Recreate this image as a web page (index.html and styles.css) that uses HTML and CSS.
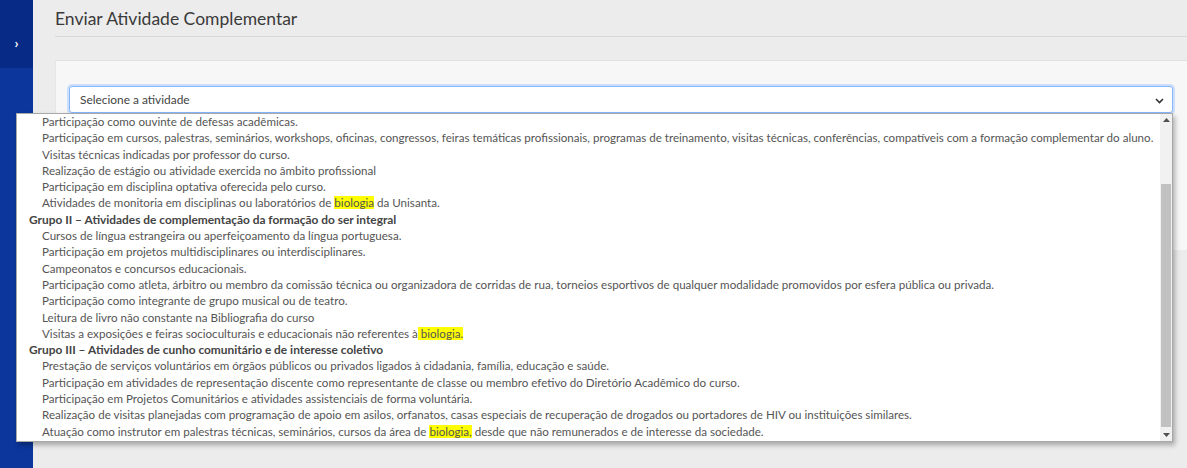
FILE: index.html
```html
<!DOCTYPE html>
<html lang="pt-BR">
<head>
<meta charset="utf-8">
<title>Enviar Atividade Complementar</title>
<link rel="stylesheet" href="styles.css">
</head>
<body>
<div class="app">
  <aside class="sidebar">
    <div class="sidebar-top"><span class="chev">›</span></div>
    <div class="sidebar-bottom"></div>
  </aside>
  <main class="main">
    <h1 class="title">Enviar Atividade Complementar</h1>
    <section class="card">
      <div class="select">
        <span>Selecione a atividade</span>
        <svg class="caret" width="9" height="6" viewBox="0 0 9 6"><path d="M1 1l3.5 3.5L8 1" fill="none" stroke="#333" stroke-width="1.6"/></svg>
      </div>
    </section>
  </main>
</div>

<div class="dropdown">
  <ul class="options">
    <li class="opt">Participação como ouvinte de defesas acadêmicas.</li>
    <li class="opt">Participação em cursos, palestras, seminários, workshops, oficinas, congressos, feiras temáticas profissionais, programas de treinamento, visitas técnicas, conferências, compatíveis com a formação complementar do aluno.</li>
    <li class="opt">Visitas técnicas indicadas por professor do curso.</li>
    <li class="opt">Realização de estágio ou atividade exercida no âmbito profissional</li>
    <li class="opt">Participação em disciplina optativa oferecida pelo curso.</li>
    <li class="opt">Atividades de monitoria em disciplinas ou laboratórios de <mark>biologia</mark> da Unisanta.</li>
    <li class="grp">Grupo II – Atividades de complementação da formação do ser integral</li>
    <li class="opt">Cursos de língua estrangeira ou aperfeiçoamento da língua portuguesa.</li>
    <li class="opt">Participação em projetos multidisciplinares ou interdisciplinares.</li>
    <li class="opt">Campeonatos e concursos educacionais.</li>
    <li class="opt">Participação como atleta, árbitro ou membro da comissão técnica ou organizadora de corridas de rua, torneios esportivos de qualquer modalidade promovidos por esfera pública ou privada.</li>
    <li class="opt">Participação como integrante de grupo musical ou de teatro.</li>
    <li class="opt">Leitura de livro não constante na Bibliografia do curso</li>
    <li class="opt">Visitas a exposições e feiras socioculturais e educacionais não referentes à<mark> biologia. </mark></li>
    <li class="grp">Grupo III – Atividades de cunho comunitário e de interesse coletivo</li>
    <li class="opt">Prestação de serviços voluntários em órgãos públicos ou privados ligados à cidadania, família, educação e saúde.</li>
    <li class="opt">Participação em atividades de representação discente como representante de classe ou membro efetivo do Diretório Acadêmico do curso.</li>
    <li class="opt">Participação em Projetos Comunitários e atividades assistenciais de forma voluntária.</li>
    <li class="opt">Realização de visitas planejadas com programação de apoio em asilos, orfanatos, casas especiais de recuperação de drogados ou portadores de HIV ou instituições similares.</li>
    <li class="opt">Atuação como instrutor em palestras técnicas, seminários, cursos da área de <mark>biologia,</mark> desde que não remunerados e de interesse da sociedade.</li>
  </ul>
  <div class="scrollbar">
    <div class="sb-btn"><svg width="7" height="4" viewBox="0 0 7 4"><path d="M0 4L3.5 0 7 4z" fill="#505050"/></svg></div>
    <div class="sb-track"><div class="sb-thumb"></div></div>
    <div class="sb-btn"><svg width="7" height="4" viewBox="0 0 7 4"><path d="M0 0h7L3.5 4z" fill="#505050"/></svg></div>
  </div>
</div>
</body>
</html>
```

FILE: styles.css
```css
* { box-sizing: border-box; }
html, body { margin: 0; padding: 0; }
body {
  width: 1187px;
  height: 468px;
  overflow: hidden;
  background: #ececec;
  font-family: Lato, "Open Sans", "Liberation Sans", sans-serif;
  color: #555;
  position: relative;
}
.app { display: flex; height: 468px; }
.sidebar {
  width: 33px;
  display: flex;
  flex-direction: column;
  flex-shrink: 0;
}
.sidebar-top {
  height: 68px;
  background: #062a85;
  display: flex;
  justify-content: center;
  align-items: flex-start;
  padding-top: 36px;
}
.chev { color: #fff; font-weight: 700; font-size: 14px; line-height: 14px; }
.sidebar-bottom { flex: 1; background: #0c369c; }

.main { flex: 1; padding-left: 22px; display: flex; flex-direction: column; }
.title {
  margin: 0;
  height: 37px;
  padding-top: 8px;
  font-size: 17.5px;
  font-weight: 400;
  color: #3a3a3a;
  border-bottom: 1px solid #d8d8d8;
}
.card {
  margin-top: 23px;
  height: 190px;
  background: #f7f7f7;
  border-top: 1px solid #e0e0e0;
  border-left: 1px solid #e6e6e6;
  padding: 25px 14px 0 13px;
}
.select {
  height: 27px;
  background: #fff;
  border: 1px solid #86b7fe;
  border-radius: 3px;
  box-shadow: 0 0 0 2px rgba(13,110,253,0.18);
  display: flex;
  align-items: center;
  justify-content: space-between;
  padding: 0 8px 0 10px;
  font-size: 11.9px;
  color: #444;
}
.caret { margin-top: 2px; }

.dropdown {
  position: absolute;
  left: 16px;
  top: 113px;
  width: 1157px;
  height: 329px;
  background: #fff;
  border: 1px solid #a8a8a8;
  box-shadow: 2px 3px 5px rgba(0,0,0,0.3);
  display: flex;
}
.options {
  list-style: none;
  margin: 0;
  padding: 0;
  flex: 1;
  font-size: 11.6px;
  line-height: 16.3px;
  white-space: nowrap;
  overflow: hidden;
}
.opt { padding-left: 25px; color: #555; }
.grp { padding-left: 12px; font-weight: 700; color: #444; font-size: 11.9px; }
mark { background: #ffff00; color: inherit; }
.scrollbar {
  width: 12px;
  display: flex;
  flex-direction: column;
  background: #f1f1f1;
}
.sb-btn { height: 12px; display: flex; align-items: center; justify-content: center; }
.sb-track { flex: 1; display: flex; flex-direction: column; justify-content: flex-end; padding: 0 1px 2px; }
.sb-thumb { height: 243px; background: #c1c1c1; }
```
